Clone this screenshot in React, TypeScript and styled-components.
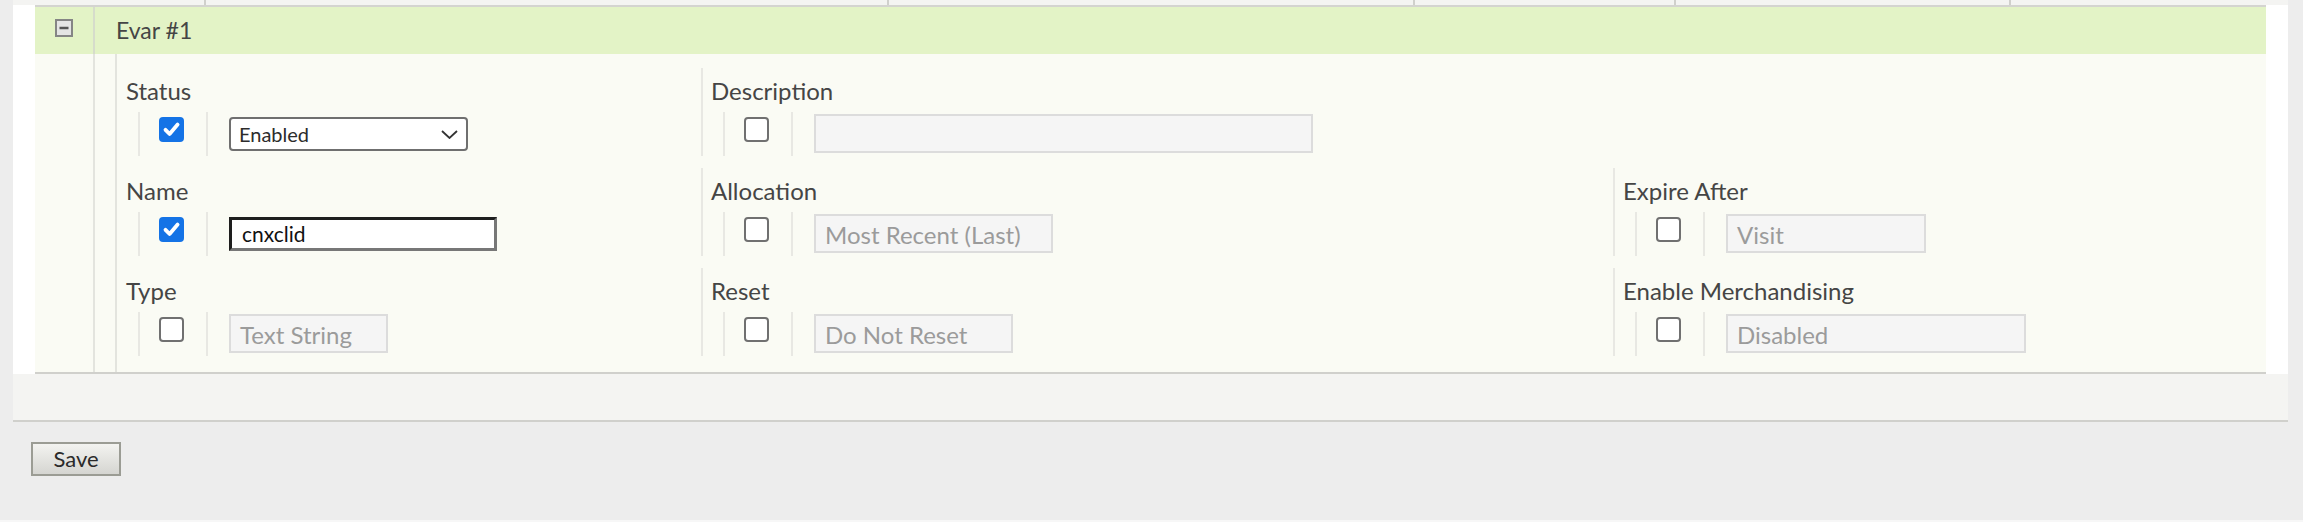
import styled, { createGlobalStyle } from 'styled-components';

const GlobalStyle = createGlobalStyle`
  html, body {
    margin: 0;
    padding: 0;
    background: #ededed;
  }
  body {
    font-family: Lato, "Liberation Sans", sans-serif;
    color: #454545;
  }
  * { box-sizing: border-box; }
`;

const Page = styled.div`
  width: 2303px;
  height: 522px;
  overflow: hidden;
  background: #ededed;
  display: flex;
  flex-direction: column;
`;

const Panel = styled.div`
  margin-left: 13px;
  width: 2275px;
  background: #ffffff;
`;

// tail of the previous table row, mostly scrolled away
const PrevRow = styled.div`
  height: 5px;
  background: #f4f4f2;
  display: grid;
  grid-template-columns: 191px 683px 526px 261px 335px 1fr;
`;
const PrevCell = styled.div<{ $first?: boolean }>`
  border-left: ${p => (p.$first ? 'none' : '2px solid #d0d0cc')};
`;

const Item = styled.div`
  margin: 0 22px;
  border-top: 2px solid #d4d4d0;
  border-bottom: 2px solid #d0d0cc;
`;

const Header = styled.div`
  height: 47px;
  background: #e3f3c6;
  display: flex;
`;

const IconCell = styled.div<{ $head?: boolean }>`
  width: 60px;
  flex: none;
  border-right: 2px solid ${p => (p.$head ? '#d6dccb' : '#e3e4de')};
  display: flex;
  justify-content: center;
  padding-top: 12px;
`;

const Title = styled.div`
  padding-left: 21px;
  font-size: 23px;
  line-height: 47px;
  color: #454545;
`;

const Body = styled.div`
  height: 318px;
  background: #fafbf4;
  display: flex;
`;

const Indent = styled.div`
  width: 20px;
  flex: none;
`;

const Fields = styled.div`
  flex: 1;
  border-left: 2px solid #e3e4de;
  display: grid;
  grid-template-columns: 584px 912px 1fr;
  grid-auto-rows: 88px;
  row-gap: 12px;
  padding-top: 14px;
`;

const Cell = styled.div<{ $edge?: boolean }>`
  border-left: ${p => (p.$edge ? 'none' : '2px solid #e8e8e3')};
  padding-left: ${p => (p.$edge ? '9px' : '8px')};
  display: flex;
  flex-direction: column;
`;

const Blank = styled.div``;

const Label = styled.div`
  height: 44px;
  padding-top: 8px;
  font-size: 24px;
  line-height: 30px;
  color: #454545;
  white-space: nowrap;
`;

const Controls = styled.div`
  height: 44px;
  margin-left: 12px;
  display: flex;
`;

const CheckSlot = styled.div`
  width: 68px;
  flex: none;
  border-left: 2px solid #e8e8e3;
  padding: 5px 0 0 19px;
`;

const FieldSlot = styled.div`
  border-left: 2px solid #e8e8e3;
  padding-left: 21px;
`;

const Box = styled.div<{ $on?: boolean }>`
  width: 25px;
  height: 25px;
  border-radius: 4px;
  background: ${p => (p.$on ? '#1473e6' : '#ffffff')};
  border: ${p => (p.$on ? 'none' : '2px solid #707070')};
  display: flex;
  align-items: center;
  justify-content: center;
`;

const Select = styled.div<{ $w: number }>`
  margin-top: 5px;
  width: ${p => p.$w}px;
  height: 34px;
  border: 2px solid #6f6f6f;
  border-radius: 4px;
  background: #ffffff;
  padding: 0 8px;
  font-size: 20px;
  line-height: 30px;
  color: #2c2c2c;
  display: flex;
  justify-content: space-between;
`;

const Chevron = styled.svg`
  margin-top: 11px;
`;

const TextBox = styled.div<{ $w: number }>`
  margin-top: 5px;
  width: ${p => p.$w}px;
  height: 34px;
  border-width: 3px;
  border-style: solid;
  border-color: #1e1e1e #777777 #777777 #1e1e1e;
  background: #ffffff;
  padding-left: 10px;
  font-size: 21px;
  line-height: 28px;
  color: #111111;
`;

const Locked = styled.div<{ $w: number }>`
  margin-top: 2px;
  width: ${p => p.$w}px;
  height: 39px;
  border: 2px solid #dcdcdc;
  background: #f5f5f5;
  padding: 3px 0 0 9px;
  font-size: 24px;
  line-height: 32px;
  color: #9b9b9b;
  white-space: nowrap;
`;

const FooterBar = styled.div`
  height: 48px;
  background: #f4f4f2;
  border-bottom: 2px solid #d0d0cc;
`;

const SaveArea = styled.div`
  height: 98px;
  padding: 20px 0 0 31px;
`;

const SaveButton = styled.button`
  width: 90px;
  height: 34px;
  border: 2px solid #9b9c94;
  background: linear-gradient(#f3f3f0, #d5d5d1);
  font-family: Lato, "Liberation Sans", sans-serif;
  font-size: 22px;
  line-height: 28px;
  color: #2a2a2a;
  padding: 0;
  border-radius: 0;
`;

const BottomEdge = styled.div`
  height: 2px;
  background: #f7f7f7;
`;

const CollapseIcon = () => (
  <svg width="18" height="18" viewBox="0 0 18 18">
    <rect x="1" y="1" width="16" height="16" fill="#e4e4e4" stroke="#858585" strokeWidth="2" />
    <line x1="4.5" y1="9" x2="13.5" y2="9" stroke="#555555" strokeWidth="2.5" />
  </svg>
);

const Check = ({ on }: { on?: boolean }) => (
  <Box $on={on}>
    {on && (
      <svg width="25" height="25" viewBox="0 0 25 25">
        <path d="M6.5 12.8 L10.6 17 L18.6 7.6" fill="none" stroke="#ffffff" strokeWidth="3.8" strokeLinecap="round" strokeLinejoin="round" />
      </svg>
    )}
  </Box>
);

type Field = {
  label: string;
  on?: boolean;
  kind: 'select' | 'text' | 'locked';
  value: string;
  w: number;
} | null;

const rows: Field[][] = [
  [
    { label: 'Status', on: true, kind: 'select', value: 'Enabled', w: 239 },
    { label: 'Description', kind: 'locked', value: '', w: 499 },
    null,
  ],
  [
    { label: 'Name', on: true, kind: 'text', value: 'cnxclid', w: 268 },
    { label: 'Allocation', kind: 'locked', value: 'Most Recent (Last)', w: 239 },
    { label: 'Expire After', kind: 'locked', value: 'Visit', w: 200 },
  ],
  [
    { label: 'Type', kind: 'locked', value: 'Text String', w: 159 },
    { label: 'Reset', kind: 'locked', value: 'Do Not Reset', w: 199 },
    { label: 'Enable Merchandising', kind: 'locked', value: 'Disabled', w: 300 },
  ],
];

const Control = ({ f }: { f: NonNullable<Field> }) => {
  if (f.kind === 'select') {
    return (
      <Select $w={f.w}>
        {f.value}
        <Chevron width="17" height="9" viewBox="0 0 17 9">
          <path d="M1 1 L8.5 8 L16 1" fill="none" stroke="#333333" strokeWidth="1.8" />
        </Chevron>
      </Select>
    );
  }
  if (f.kind === 'text') return <TextBox $w={f.w}>{f.value}</TextBox>;
  return <Locked $w={f.w}>{f.value}</Locked>;
};

export default function App() {
  return (
    <Page>
      <GlobalStyle />
      <Panel>
        <PrevRow>
          {[0, 1, 2, 3, 4, 5].map(i => (
            <PrevCell key={i} $first={i === 0} />
          ))}
        </PrevRow>
        <Item>
          <Header>
            <IconCell $head>
              <CollapseIcon />
            </IconCell>
            <Title>Evar #1</Title>
          </Header>
          <Body>
            <IconCell />
            <Indent />
            <Fields>
              {rows.map((row, r) =>
                row.map((f, c) =>
                  f ? (
                    <Cell key={`${r}-${c}`} $edge={c === 0}>
                      <Label>{f.label}</Label>
                      <Controls>
                        <CheckSlot>
                          <Check on={f.on} />
                        </CheckSlot>
                        <FieldSlot>
                          <Control f={f} />
                        </FieldSlot>
                      </Controls>
                    </Cell>
                  ) : (
                    <Blank key={`${r}-${c}`} />
                  )
                )
              )}
            </Fields>
          </Body>
        </Item>
        <FooterBar />
      </Panel>
      <SaveArea>
        <SaveButton>Save</SaveButton>
      </SaveArea>
      <BottomEdge />
    </Page>
  );
}
